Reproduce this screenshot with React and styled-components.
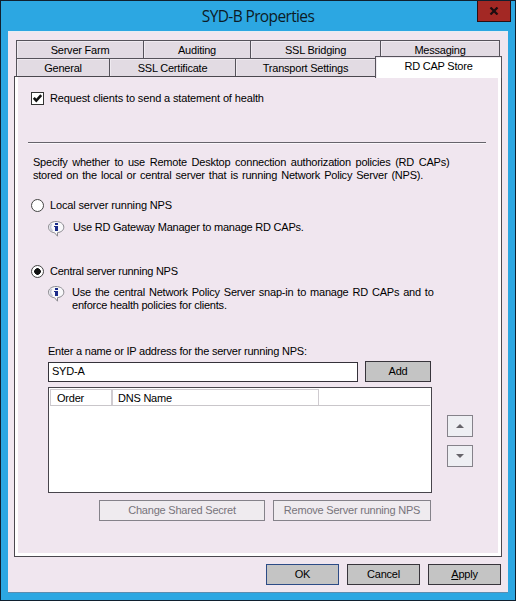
import React from 'react';
import styled, { createGlobalStyle } from 'styled-components';

const Global = createGlobalStyle`
  *, *::before, *::after { box-sizing: border-box; }
  body { margin: 0; background: #2ca7e2; }
`;

const Window = styled.main`
  width: 516px;
  height: 601px;
  display: flex;
  flex-direction: column;
  padding: 0 7px 7px;
  background: #2ca7e2;
  border: 1px solid #10202f;
  font: 11px/13px 'Liberation Sans', Arial, sans-serif;
  letter-spacing: -0.22px;
  color: #000;
  cursor: default;
`;

const TitleBar = styled.header`
  height: 30px;
  flex: none;
  display: grid;
  grid-template-columns: 1fr 34px;
  margin-right: -3px;
`;

const Title = styled.h1`
  margin: 0;
  padding: 4px 0 0 31px;
  font: 400 15.5px/22px 'Open Sans', sans-serif;
  letter-spacing: -0.63px;
  text-align: center;
  color: #0c1b26;
`;

const CloseButton = styled.button`
  height: 21px;
  padding: 0;
  border: 1px solid #2a0f14;
  border-top: 0;
  background: #a32824;
  display: flex;
  align-items: center;
  justify-content: center;
`;

const Client = styled.div`
  flex: 1;
  display: flex;
  flex-direction: column;
  padding: 8px 6px 0;
  background: #f0e6ef;
  border-top: 1px solid #e4edf4;
  border-bottom: 1px solid #5b8db0;
`;

const TabRow = styled.div`
  display: flex;
  height: 18px;
  margin-left: 2px;
`;

const Tab = styled.div`
  width: ${p => p.$w}px;
  height: 18px;
  padding-top: 3px;
  text-align: center;
  border-top: 1px solid #55525a;
  border-left: 1px solid #55525a;
  background: #e2dbe3;
  box-shadow: inset 1px 1px 0 #efeaf0;
  ${p => p.$last && 'border-right: 1px solid #55525a;'}
`;

const ActiveTab = styled(Tab)`
  position: relative;
  z-index: 1;
  height: 22px;
  margin-top: -2px;
  padding-top: 3px;
  background: #fff;
  border-right: 1px solid #55525a;
`;

const Panel = styled.section`
  width: 488px;
  height: 481px;
  display: flex;
  flex-direction: column;
  border: 1px solid #4a474e;
  background: #f0e6ef;
  box-shadow: inset 3px 0 0 #fff, inset -3px -3px 0 #fff;
  padding: 15px 15px 0 16px;
`;

const Choice = styled.label`
  display: flex;
  align-items: center;
  gap: 6px;
  height: 13px;
  margin-top: ${p => p.$top || 0}px;
  letter-spacing: ${p => p.$ls || -0.14}px;
`;

const CheckBox = styled.span`
  width: 13px;
  height: 13px;
  border: 1px solid #333;
  background: #fff;
  display: flex;
`;

const Radio = styled.span`
  width: 13px;
  height: 13px;
  flex: none;
  border: 1px solid #444;
  border-radius: 50%;
  background: ${p => (p.$on ? 'radial-gradient(circle, #111 0 3px, #fff 3.6px)' : '#fff')};
`;

const Rule = styled.hr`
  width: 458px;
  height: 2px;
  margin: 37px 0 0 -3px;
  border: 0;
  border-top: 1px solid #66636b;
  background: #faf6fa;
`;

const Paragraph = styled.div`
  margin: 12px 0 0 2px;
  white-space: nowrap;
`;

const Line = styled.div`
  word-spacing: ${p => p.$ws || 0}px;
`;

const Note = styled.div`
  display: flex;
  gap: ${p => p.$gap}px;
  margin: ${p => p.$top}px 0 0 17px;
  white-space: nowrap;
`;

const ServerArea = styled.div`
  width: 384px;
  margin: 33px 0 0 17px;
`;

const AddRow = styled.div`
  display: flex;
  align-items: flex-end;
  gap: 7px;
  margin-top: 3px;
`;

const Input = styled.div`
  width: 310px;
  height: 20px;
  padding: 2px 3px;
  border: 1px solid #35323a;
  background: #fff;
`;

const Button = styled.button`
  width: ${p => p.$w}px;
  height: 21px;
  padding: 0;
  border: 1px solid ${p => (p.$default ? '#2c4b86' : '#37343b')};
  border-radius: 0;
  background: #c4c4c4;
  color: #000;
  font: inherit;
  letter-spacing: inherit;
  &:disabled {
    background: #efebef;
    border-color: #85828a;
    color: #77747b;
  }
`;

const ListRow = styled.div`
  display: flex;
  gap: 15px;
  margin-top: 5px;
`;

const List = styled.div`
  width: 384px;
  height: 106px;
  flex: none;
  padding: 1px 1px 0;
  border: 1px solid #48454c;
  background: #fff;
`;

const ListHeader = styled.div`
  display: flex;
  height: 17px;
  border-bottom: 1px solid #c9c6ca;
`;

const Column = styled.div`
  width: ${p => p.$w}px;
  padding: 2px 0 0 ${p => p.$pad}px;
  border-top: 1px solid #cfcbd0;
  border-left: 1px solid #cfcbd0;
  border-right: 1px solid #cfcbd0;
`;

const ArrowColumn = styled.div`
  display: flex;
  flex-direction: column;
  gap: 8px;
  padding-top: 28px;
`;

const ArrowButton = styled.button`
  width: 26px;
  height: 22px;
  padding: 0;
  border: 1px solid #85828a;
  background: #eeeff3;
  display: flex;
  align-items: center;
  justify-content: center;
`;

const ActionRow = styled.div`
  display: flex;
  gap: 8px;
  justify-content: flex-end;
  margin: 7px 1px 0 0;
`;

const Footer = styled.footer`
  display: flex;
  justify-content: flex-end;
  gap: 8px;
  padding: 7px 1px 0 0;
`;

const InfoIcon = () => (
  <svg width="17" height="16" viewBox="0 0 17 16">
    <path d="M8 .5C3.600.5.5 2.900.5 6.200c0 2.900 2.300 5 6 5.500L9.500 15.200V11.600C13.500 11.200 15.800 9 15.800 6.200 15.800 2.900 12.400.5 8 .5Z" fill="#f8f8fa" stroke="#8b8a90" />
    <path d="M3.800 2.800C1.600 5 2 8.200 4.600 9.900" fill="none" stroke="#c6c8d6" strokeWidth="1.800" />
    <rect x="7" y="2" width="3" height="2" fill="#1c2c8a" />
    <path d="M6 5h4v5H7V6H6Z" fill="#1c2c8a" />
  </svg>
);

const Arrow = ({ down }) => (
  <svg width="8" height="4" viewBox="0 0 8 4">
    <path d={down ? 'M0 0H8L4 4Z' : 'M0 4H8L4 0Z'} fill="#66646a" />
  </svg>
);

export default function App() {
  return (
    <Window>
      <Global />
      <TitleBar>
        <Title>SYD-B Properties</Title>
        <CloseButton aria-label="Close">
          <svg width="10" height="8" viewBox="0 0 10 8">
            <path d="M1.500 0.500L8.500 7.500M8.500 0.500L1.500 7.500" stroke="#1c0d10" strokeWidth="2.200" />
          </svg>
        </CloseButton>
      </TitleBar>
      <Client>
        <TabRow>
          <Tab $w={127}>Server Farm</Tab>
          <Tab $w={107}>Auditing</Tab>
          <Tab $w={130}>SSL Bridging</Tab>
          <Tab $w={120} $last>Messaging</Tab>
        </TabRow>
        <TabRow>
          <Tab $w={93}>General</Tab>
          <Tab $w={126}>SSL Certificate</Tab>
          <Tab $w={140}>Transport Settings</Tab>
          <ActiveTab $w={127}>RD CAP Store</ActiveTab>
        </TabRow>
        <Panel>
          <Choice>
            <CheckBox>
              <svg width="11" height="11" viewBox="0 0 11 11">
                <path d="M1.800 4.800L4.300 7.600L9.200 2.200" fill="none" stroke="#111" strokeWidth="2.600" />
              </svg>
            </CheckBox>
            Request clients to send a statement of health
          </Choice>
          <Rule />
          <Paragraph>
            <Line $ws={1.85}>Specify whether to use Remote Desktop connection authorization policies (RD CAPs)</Line>
            <Line $ws={1.25}>stored on the local or central server that is running Network Policy Server (NPS).</Line>
          </Paragraph>
          <Choice $top={17}>
            <Radio />
            Local server running NPS
          </Choice>
          <Note $top={9} $gap={8}>
            <InfoIcon />
            <Line>Use RD Gateway Manager to manage RD CAPs.</Line>
          </Note>
          <Choice $top={28} $ls={-0.26}>
            <Radio $on />
            Central server running NPS
          </Choice>
          <Note $top={8} $gap={7}>
            <InfoIcon />
            <div>
              <Line $ws={1.15}>Use the central Network Policy Server snap-in to manage RD CAPs and to</Line>
              <Line>enforce health policies for clients.</Line>
            </div>
          </Note>
          <ServerArea>
            <div>Enter a name or IP address for the server running NPS:</div>
            <AddRow>
              <Input>SYD-A</Input>
              <Button $w={66}>Add</Button>
            </AddRow>
            <ListRow>
              <List>
                <ListHeader>
                  <Column $w={62} $pad={6}>Order</Column>
                  <Column $w={207} $pad={5}>DNS Name</Column>
                </ListHeader>
              </List>
              <ArrowColumn>
                <ArrowButton aria-label="Move up"><Arrow /></ArrowButton>
                <ArrowButton aria-label="Move down"><Arrow down /></ArrowButton>
              </ArrowColumn>
            </ListRow>
            <ActionRow>
              <Button $w={166} disabled>Change Shared Secret</Button>
              <Button $w={158} disabled>Remove Server running NPS</Button>
            </ActionRow>
          </ServerArea>
        </Panel>
        <Footer>
          <Button $w={73} $default>OK</Button>
          <Button $w={73}>Cancel</Button>
          <Button $w={73}><u>A</u>pply</Button>
        </Footer>
      </Client>
    </Window>
  );
}
